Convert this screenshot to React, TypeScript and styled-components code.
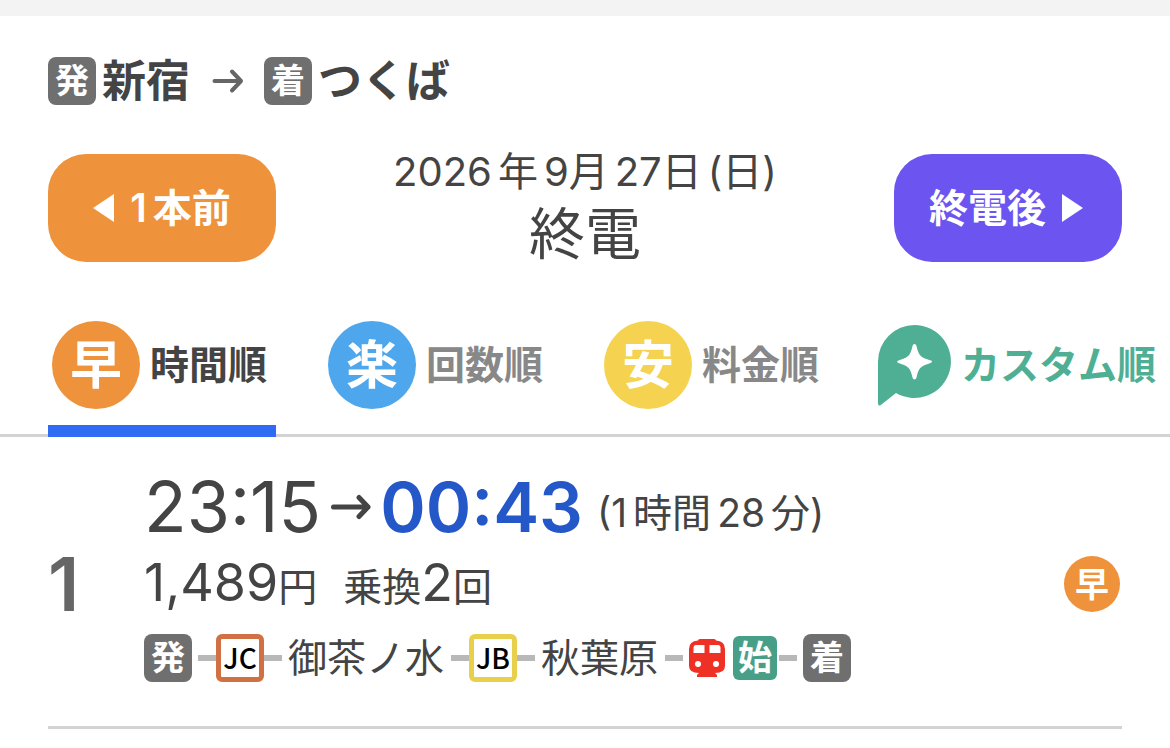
import React from "react";
import styled, { createGlobalStyle } from "styled-components";

const GlobalStyle = createGlobalStyle`
  * { box-sizing: border-box; }
  body {
    margin: 0;
    background: #fff;
    color: #444;
    font-family: Inter, "Noto Sans CJK JP", sans-serif;
  }
  button { border: 0; padding: 0; background: none; font: inherit; cursor: pointer; }
  h1, p { margin: 0; font-weight: 400; }
  svg { display: block; flex: none; }
`;

const TopStrip = styled.div`
  height: 16px;
  background: #f3f3f3;
`;

const RouteTitle = styled.h1`
  display: flex;
  align-items: center;
  height: 48px;
  margin: 41px 48px 0;
`;

const Place = styled.span`
  margin-left: 6px;
  font-size: 44px;
  line-height: 48px;
  font-weight: 700;
`;

const TitleArrow = styled.span`
  margin: 0 20px 0 22px;
`;

const Badge = styled.span<{ $color?: string; $size?: number }>`
  display: flex;
  align-items: center;
  justify-content: center;
  flex: none;
  width: ${(p) => p.$size ?? 48}px;
  height: ${(p) => p.$size ?? 48}px;
  border-radius: ${(p) => (p.$size ? 6 : 8)}px;
  background: ${(p) => p.$color ?? "#6f6f6f"};
  color: #fff;
  font-size: 34px;
  line-height: 48px;
  font-weight: 700;
`;

const DateBar = styled.div`
  display: flex;
  justify-content: space-between;
  align-items: flex-start;
  margin: 49px 48px 0;
`;

const ShiftButton = styled.button<{ $color: string }>`
  display: flex;
  align-items: center;
  justify-content: center;
  gap: 16px;
  width: 228px;
  height: 108px;
  border-radius: 38px;
  background: ${(p) => p.$color};
  color: #fff;
  font-size: 39px;
  line-height: 48px;
  font-weight: 600;
`;

const NextButton = styled(ShiftButton)`
  padding-right: 4px;
`;

const Words = styled.span<{ $gap: number }>`
  display: flex;
  justify-content: center;
  gap: ${(p) => p.$gap}px;
`;

const DateText = styled.div`
  text-align: center;
`;

const DateLine = styled.p`
  font-size: 40px;
  line-height: 36px;
`;

const TrainKind = styled.p`
  margin-top: 4px;
  font-size: 56px;
  line-height: 80px;
`;

const Tabs = styled.nav`
  display: flex;
  gap: 48px;
  height: 123px;
  margin-top: 40px;
  padding-left: 48px;
  overflow: hidden;
  box-shadow: inset 0 -3px #d3d3d3;
`;

const Tab = styled.button<{ $color: string; $active?: boolean }>`
  display: flex;
  align-items: center;
  gap: 10px;
  flex: none;
  min-width: 228px;
  padding: 7px 0 16px 4px;
  border-bottom: 12px solid ${(p) => (p.$active ? "#306bf4" : "transparent")};
  color: ${(p) => p.$color};
  font-size: 39px;
  line-height: 48px;
  font-weight: 600;
`;

const CustomTab = styled(Tab)`
  padding-left: 2px;
`;

const Round = styled.span<{ $color: string; $small?: boolean }>`
  display: flex;
  align-items: center;
  justify-content: center;
  flex: none;
  width: ${(p) => (p.$small ? 56 : 88)}px;
  height: ${(p) => (p.$small ? 56 : 88)}px;
  padding-top: 2px;
  border-radius: 50%;
  background: ${(p) => p.$color};
  color: #fff;
  font-size: ${(p) => (p.$small ? 34 : 52)}px;
  line-height: 54px;
  font-weight: 700;
`;

const Result = styled.article`
  display: flex;
  align-items: center;
  margin: 0 48px;
  padding: 38px 2px 44px 0;
  border-bottom: 3px solid #d3d3d3;
`;

const Rank = styled.span`
  width: 96px;
  padding-top: 10px;
  color: #666;
  font-size: 74px;
  line-height: 80px;
  font-weight: 600;
`;

const Grade = styled.span`
  padding-top: 10px;
`;

const Detail = styled.div`
  flex: 1;
`;

const Times = styled.p`
  display: flex;
  align-items: center;
  height: 64px;
  font-size: 70px;
  line-height: 64px;
`;

const Arrival = styled.span`
  margin-left: 9px;
  color: #2458c8;
  font-size: 69px;
  font-weight: 600;
`;

const TimeArrow = styled.span`
  margin-left: 10px;
`;

const Duration = styled.span`
  margin: 12px 0 0 14px;
  font-size: 39px;
  line-height: 48px;
`;

const Fare = styled.p`
  display: flex;
  align-items: baseline;
  gap: 26px;
  height: 64px;
  margin-top: 12px;
  font-size: 39px;
  line-height: 64px;
`;

const Figure = styled.span`
  font-size: 52px;
`;

const Stops = styled.div`
  display: flex;
  align-items: center;
  height: 48px;
  margin-top: 19px;
`;

const Dash = styled.span`
  width: 18px;
  height: 6px;
  background: #b8b8b8;
`;

const Spacer = styled.span<{ $width?: number }>`
  width: ${(p) => p.$width ?? 6}px;
`;

const Station = styled.span`
  margin: 0 7px 0 6px;
  font-size: 39px;
  line-height: 48px;
`;

const LineCode = styled.span<{ $color: string }>`
  display: flex;
  align-items: center;
  justify-content: center;
  width: 48px;
  height: 48px;
  border: 5px solid ${(p) => p.$color};
  border-radius: 6px;
  color: #000;
  font-family: "Noto Sans CJK JP", sans-serif;
  font-size: 28px;
  line-height: 36px;
  padding-bottom: 2px;
  font-weight: 500;
`;

const Arrow = ({ width, color, stroke }: { width: number; color: string; stroke: number }) => (
  <svg width={width} height="28" viewBox={`0 0 ${width} 28`} fill="none" stroke={color}
    strokeWidth={stroke} strokeLinecap="round" strokeLinejoin="round">
    <path d={`M2.5 14H${width - 3}M${width - 12} 4.5L${width - 3} 14L${width - 12} 23.5`} />
  </svg>
);

const Triangle = ({ left }: { left?: boolean }) => (
  <svg width="21" height="28" viewBox="0 0 21 28" fill="#fff">
    <path d={left ? "M21 0V28L0 14Z" : "M0 0V28L21 14Z"} />
  </svg>
);

const CustomIcon = () => (
  <svg width="73" height="81" viewBox="0 0 73 81">
    <path fill="#4faf95" d="M36.5 0A36.5 36.5 0 1 1 18 68L2.5 80.2Q0 81 0 78.5V36.5A36.5 36.5 0 0 1 36.5 0Z" />
    <path fill="#fff" d="M36.5 19Q38 19 38.5 21C40.5 30 42 32 50.500 34.8Q54 35.5 54 36.7T50.500 38.7C42 41.500 40.5 43.5 38.5 52.5Q38 54.5 36.5 54.5T34.5 52.5C32.5 43.5 31 41.5 22.5 38.7Q19 37.8 19 36.7T22.5 34.8C31 32 32.5 30 34.5 21Q35 19 36.5 19Z" />
  </svg>
);

const TrainIcon = () => (
  <svg width="36" height="38" viewBox="0 0 36 38">
    <path fill="#ee3124" d="M9 1.5Q9 0 11 0H25Q27 0 27 1.5Q36 2 36 10V27Q36 34 26 34L28 36V38H8V36L10 34Q0 34 0 27V10Q0 2 9 1.5Z" />
    <path fill="#fff" d="M7 6H15.5V14H4.5V9Q4.5 6 7 6ZM20.5 6H29Q31.5 6 31.5 9V14H20.5Z" />
    <circle cx="9" cy="25" r="3" fill="#fff" />
    <circle cx="27" cy="25" r="3" fill="#fff" />
  </svg>
);

export default function App() {
  return (
    <>
      <GlobalStyle />
      <TopStrip />
      <main>
        <RouteTitle>
          <Badge>発</Badge>
          <Place>新宿</Place>
          <TitleArrow><Arrow width={32} color="#666" stroke={4} /></TitleArrow>
          <Badge>着</Badge>
          <Place>つくば</Place>
        </RouteTitle>

        <DateBar>
          <ShiftButton $color="#ee923b">
            <Triangle left />
            <Words $gap={6}><span>1</span><span>本前</span></Words>
          </ShiftButton>
          <DateText>
            <DateLine>
              <Words $gap={6}>
                <span>2026</span><span>年</span><span>9月</span><span>27日</span><span>(日)</span>
              </Words>
            </DateLine>
            <TrainKind>終電</TrainKind>
          </DateText>
          <NextButton $color="#6b54f0">終電後<Triangle /></NextButton>
        </DateBar>

        <Tabs aria-label="並び順">
          <Tab $color="#444" $active><Round $color="#ee923b">早</Round>時間順</Tab>
          <Tab $color="#888"><Round $color="#4ea7ed">楽</Round>回数順</Tab>
          <Tab $color="#888"><Round $color="#f5d351">安</Round>料金順</Tab>
          <CustomTab $color="#4faf95"><CustomIcon />カスタム順</CustomTab>
        </Tabs>

        <Result>
          <Rank>1</Rank>
          <Detail>
            <Times>
              23:15
              <TimeArrow><Arrow width={40} color="#444" stroke={5} /></TimeArrow>
              <Arrival>00:43</Arrival>
              <Duration>
                <Words $gap={6}>
                  <span>(1</span><span>時間</span><span>28</span><span>分)</span>
                </Words>
              </Duration>
            </Times>
            <Fare>
              <span><Figure>1,489</Figure>円</span>
              <span>乗換<Figure>2</Figure>回</span>
            </Fare>
            <Stops>
              <Badge>発</Badge>
              <Spacer /><Dash />
              <LineCode $color="#d07043">JC</LineCode>
              <Dash />
              <Station>御茶ノ水</Station>
              <Dash />
              <LineCode $color="#e8d04c">JB</LineCode>
              <Dash />
              <Station>秋葉原</Station>
              <Dash /><Spacer />
              <TrainIcon />
              <Spacer $width={8} />
              <Badge $color="#489f87" $size={44}>始</Badge>
              <Spacer $width={2} /><Dash /><Spacer />
              <Badge>着</Badge>
            </Stops>
          </Detail>
          <Grade><Round $color="#ee923b" $small>早</Round></Grade>
        </Result>
      </main>
    </>
  );
}
